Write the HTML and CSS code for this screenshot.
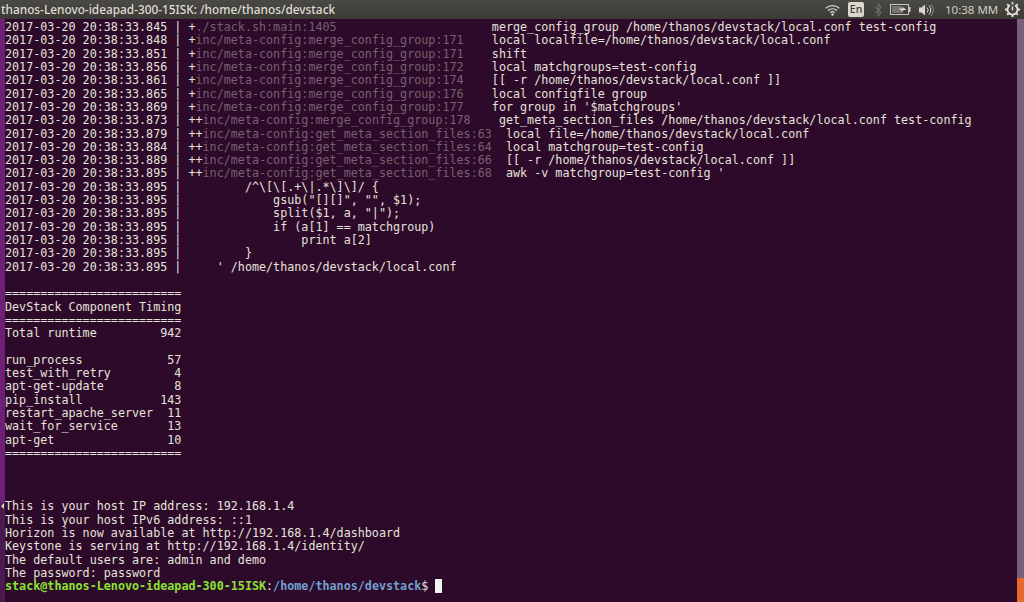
FILE: index.html
```html
<!DOCTYPE html>
<html lang="en">
<head>
<meta charset="utf-8">
<title>devstack</title>
<link rel="stylesheet" href="styles.css">
</head>
<body>
<header class="topbar">
  <div class="title">thanos-Lenovo-ideapad-300-15ISK: /home/thanos/devstack</div>
  <div class="tray">
    <svg class="ico wifi" width="15" height="12" viewBox="0 0 15 12"><g fill="none" stroke="#d8d5cc" stroke-width="1.2"><path d="M.7 4.200C4.600.8 10.400.8 14.300 4.200"/><path d="M2.900 6.500c2.700-2.300 6.500-2.300 9.200 0"/><path d="M5.100 8.600c1.500-1.200 3.300-1.200 4.800 0"/></g><circle cx="7.500" cy="10.500" r="1.200" fill="#d8d5cc"/></svg>
    <span class="lang">En</span>
    <svg class="ico bt" width="7" height="14" viewBox="0 0 7 14"><path d="M.5 4l5.500 5.500L3.200 13V1L6 4.500.5 10" fill="none" stroke="#6f6d68" stroke-width="1.100"/></svg>
    <svg class="ico batt" width="21" height="11" viewBox="0 0 21 11"><rect x=".5" y=".5" width="18" height="10" fill="none" stroke="#c9c6bd"/><rect x="18.500" y="3" width="2" height="5" fill="#c9c6bd"/><rect x="2" y="2" width="10" height="7" fill="#77756f"/><path d="M9 4.500h4l-1-2 4.500 3.500H12.500l1 2.500z" fill="#e8e5dc"/></svg>
    <svg class="ico vol" width="15" height="14" viewBox="0 0 15 14"><path d="M0 4.500h2.500L6 1.500v11L2.500 9.500H0z" fill="#d8d5cc"/><g fill="none" stroke="#d8d5cc"><path d="M8 4.500a3.500 3.500 0 0 1 0 5"/><path d="M10 2.500a6.500 6.500 0 0 1 0 9"/><path d="M12 1a9 9 0 0 1 0 12" stroke="#8a8881"/></g></svg>
    <span class="clock">10:38 MM</span>
    <svg class="ico gear" width="15" height="15" viewBox="0 0 15 15"><path d="M5 3.300a5 5 0 1 0 5 0" fill="none" stroke="#e4e1d8" stroke-width="1.800"/><path d="M7.500 4.500v4" stroke="#e4e1d8" stroke-width="1.400"/><path d="M7.500 0v2.500M7.500 12.500V15M0 7.500h2.500M12.500 7.500H15M2.200 2.200l1.800 1.800M11 11l1.800 1.800M12.800 2.200L11 4M4 11l-1.800 1.800" stroke="#e4e1d8" stroke-width="1.800"/></svg>
  </div>
</header>
<main class="terminal">
  <div class="gutter"><div class="strip"></div><span class="marker"></span></div>
<pre class="output">2017-03-20 20:38:33.845 | +<span class="dim">./stack.sh:main:1405</span>                      merge_config_group /home/thanos/devstack/local.conf test-config
2017-03-20 20:38:33.848 | +<span class="dim">inc/meta-config:merge_config_group:171</span>    local localfile=/home/thanos/devstack/local.conf
2017-03-20 20:38:33.851 | +<span class="dim">inc/meta-config:merge_config_group:171</span>    shift
2017-03-20 20:38:33.856 | +<span class="dim">inc/meta-config:merge_config_group:172</span>    local matchgroups=test-config
2017-03-20 20:38:33.861 | +<span class="dim">inc/meta-config:merge_config_group:174</span>    [[ -r /home/thanos/devstack/local.conf ]]
2017-03-20 20:38:33.865 | +<span class="dim">inc/meta-config:merge_config_group:176</span>    local configfile group
2017-03-20 20:38:33.869 | +<span class="dim">inc/meta-config:merge_config_group:177</span>    for group in '$matchgroups'
2017-03-20 20:38:33.873 | ++<span class="dim">inc/meta-config:merge_config_group:178</span>    get_meta_section_files /home/thanos/devstack/local.conf test-config
2017-03-20 20:38:33.879 | ++<span class="dim">inc/meta-config:get_meta_section_files:63</span>  local file=/home/thanos/devstack/local.conf
2017-03-20 20:38:33.884 | ++<span class="dim">inc/meta-config:get_meta_section_files:64</span>  local matchgroup=test-config
2017-03-20 20:38:33.889 | ++<span class="dim">inc/meta-config:get_meta_section_files:66</span>  [[ -r /home/thanos/devstack/local.conf ]]
2017-03-20 20:38:33.895 | ++<span class="dim">inc/meta-config:get_meta_section_files:68</span>  awk -v matchgroup=test-config '
2017-03-20 20:38:33.895 |         /^\[\[.+\|.*\]\]/ {
2017-03-20 20:38:33.895 |             gsub("[][]", "", $1);
2017-03-20 20:38:33.895 |             split($1, a, "|");
2017-03-20 20:38:33.895 |             if (a[1] == matchgroup)
2017-03-20 20:38:33.895 |                 print a[2]
2017-03-20 20:38:33.895 |         }
2017-03-20 20:38:33.895 |     ' /home/thanos/devstack/local.conf

=========================
DevStack Component Timing
=========================
Total runtime         942

run_process            57
test_with_retry         4
apt-get-update          8
pip_install           143
restart_apache_server  11
wait_for_service       13
apt-get                10
=========================



This is your host IP address: 192.168.1.4
This is your host IPv6 address: ::1
Horizon is now available at http://192.168.1.4/dashboard
Keystone is serving at http://192.168.1.4/identity/
The default users are: admin and demo
The password: password
<span class="user">stack@thanos-Lenovo-ideapad-300-15ISK</span>:<span class="path">/home/thanos/devstack</span>$ <span class="cursor"> </span></pre>
  <div class="scrollbar"><div class="thumb"></div></div>
</main>
</body>
</html>
```
FILE: styles.css
```css
* { box-sizing: border-box; }
html, body { margin: 0; height: 100%; overflow: hidden; background: #2d0a29; }
body { display: flex; flex-direction: column; width: 1024px; height: 602px; }
.topbar {
  height: 19px; flex: none; display: flex; align-items: center; justify-content: space-between;
  background: linear-gradient(#4a4943, #3b3a36); color: #dfdbd2;
  font: 500 11.830px/19px "Noto Sans", "Open Sans", sans-serif;
}
.title { padding-left: 1px; white-space: nowrap; }
.tray { display: flex; align-items: center; }
.ico { display: block; flex: none; }
.wifi { margin-right: 8px; }
.lang {
  width: 16px; height: 15px; background: #d9d6cd; color: #3c3b37; border-radius: 2px;
  font-size: 10.500px; line-height: 15px; text-align: center; margin-right: 11px;
}
.bt { margin-right: 8px; }
.batt { margin-right: 8px; }
.vol { margin-right: 11px; }
.clock { width: 50px; font-size: 11.500px; font-weight: 400; color: #d2cfc6; margin-right: 10px; white-space: nowrap; }
.gear { margin-right: 4px; }
.terminal { flex: 1; display: flex; min-height: 0; position: relative; background: #2d0a29; }
.gutter { width: 5px; flex: none; position: relative; }
.strip { height: 100%; background: linear-gradient(#6f1f76 484px, #4c1a4e 484px); }
.marker {
  position: absolute; left: 1px; top: 484px; width: 0; height: 0;
  border: 3px solid transparent; border-left-width: 0; border-right: 3px solid #d8d4d0;
}
.output {
  flex: 1; margin: 0; padding-top: 2px; min-width: 0; overflow: hidden;
  font: 11.720px/13.310px "DejaVu Sans Mono", monospace; color: #e6e2dc;
}
.dim { color: #75616f; }
.user { color: #8ae234; font-weight: 700; }
.path { color: #729fcf; font-weight: 700; }
.cursor { background: #f4f4f4; }
.scrollbar { width: 7px; flex: none; background: #7a5f78; display: flex; flex-direction: column; justify-content: flex-end; }
.thumb { height: 24px; background: #e8692e; }
```
